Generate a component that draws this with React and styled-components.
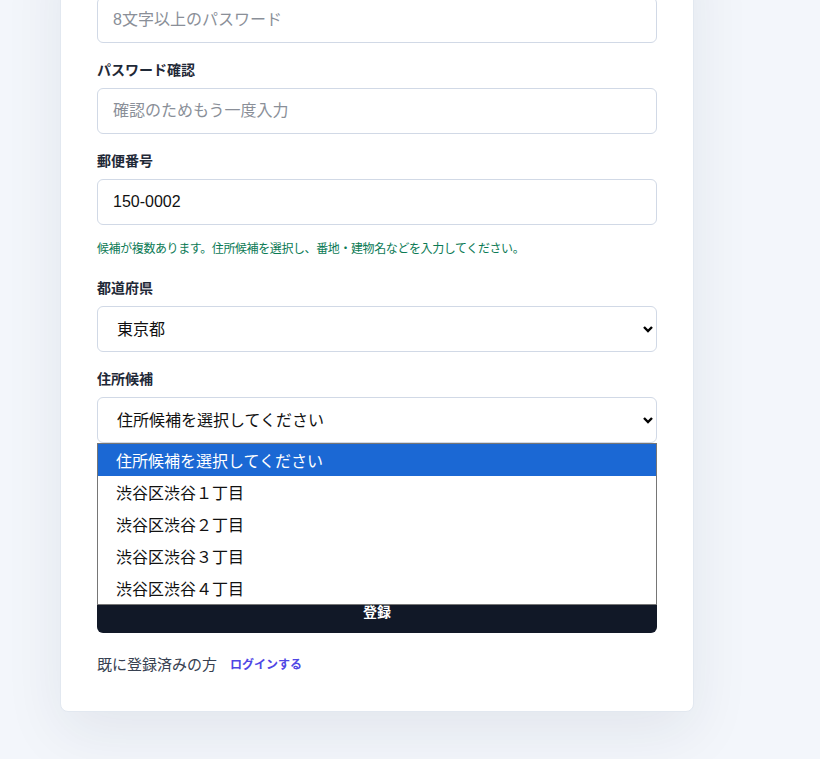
import React from 'react'
import styled, { createGlobalStyle } from 'styled-components'

const GlobalStyle = createGlobalStyle`
  * { box-sizing: border-box; }
  html, body {
    margin: 0;
    background: #f3f6fb;
    font-family: "Liberation Sans", "Noto Sans CJK JP", sans-serif;
  }
`

const Page = styled.div`
  display: flow-root;
  height: 759px;
  padding-left: 60px;
  overflow: hidden;
`

const Card = styled.div`
  width: 634px;
  margin-top: -68px;
  padding: 36px;
  background: #fff;
  border: 1px solid #e2e8f0;
  border-radius: 8px;
  box-shadow: 0 20px 60px rgba(30, 41, 59, 0.08);
`

const Form = styled.form`
  display: flex;
  flex-direction: column;
  gap: 17px;
`

const Field = styled.div`
  display: flex;
  flex-direction: column;
  gap: 8px;
`

const Label = styled.label`
  font-size: 14px;
  line-height: 20px;
  font-weight: 700;
  color: #1f2937;
`

const Input = styled.input`
  height: 46px;
  padding: 0 15px;
  border: 1px solid #d1d9e6;
  border-radius: 6px;
  font: inherit;
  font-size: 16px;
  color: #111;
  background: #fff;
  &::placeholder { color: #8a8f98; }
`

const SelectWrap = styled.div`
  position: relative;
`

const Select = styled.select`
  width: 100%;
  height: 46px;
  padding: 0 19px;
  border: 1px solid #d1d9e6;
  border-radius: 6px;
  font: inherit;
  font-size: 16px;
  color: #111;
  background: #fff;
  appearance: none;
`

const Chevron = styled.svg`
  position: absolute;
  right: 4px;
  top: 19px;
  width: 10px;
  height: 8px;
  pointer-events: none;
`

const Helper = styled.p`
  margin: 8px 0 4px;
  font-size: 12px;
  line-height: 16px;
  letter-spacing: -0.4px;
  color: #0b7a55;
`

const Dropdown = styled.ul`
  position: absolute;
  top: 100%;
  left: 0;
  right: 0;
  margin: 0;
  padding: 0;
  list-style: none;
  background: #fff;
  border: 1px solid #767676;
  z-index: 10;
`

const Option = styled.li`
  height: 32px;
  padding-left: 18px;
  display: flex;
  align-items: center;
  font-size: 16px;
  color: ${p => (p.$active ? '#fff' : '#111')};
  background: ${p => (p.$active ? '#1b68d4' : '#fff')};
`

const Button = styled.button`
  height: 44px;
  margin-top: 66px;
  border: 0;
  border-radius: 6px;
  background: #111827;
  color: #fff;
  font: inherit;
  font-size: 14px;
  font-weight: 700;
`

const Footer = styled.div`
  display: flex;
  align-items: center;
  gap: 13px;
  margin-top: 22px;
  line-height: 20px;
  font-size: 15px;
  color: #374151;
`

const LoginLink = styled.a`
  font-size: 12px;
  font-weight: 700;
  color: #4f46e5;
  text-decoration: none;
`

const options = ['住所候補を選択してください', '渋谷区渋谷１丁目', '渋谷区渋谷２丁目', '渋谷区渋谷３丁目', '渋谷区渋谷４丁目']

const Arrow = () => (
  <Chevron viewBox="0 0 10 8">
    <polyline points="1 2 5 6 9 2" fill="none" stroke="#000" strokeWidth="2.4" />
  </Chevron>
)

export default function App() {
  return (
    <Page>
      <GlobalStyle />
      <Card>
        <Form onSubmit={e => e.preventDefault()}>
          <Field>
            <Label>パスワード</Label>
            <Input type="password" placeholder="8文字以上のパスワード" />
          </Field>
          <Field>
            <Label>パスワード確認</Label>
            <Input type="password" placeholder="確認のためもう一度入力" />
          </Field>
          <Field>
            <Label>郵便番号</Label>
            <Input defaultValue="150-0002" />
            <Helper>候補が複数あります。住所候補を選択し、番地・建物名などを入力してください。</Helper>
          </Field>
          <Field>
            <Label>都道府県</Label>
            <SelectWrap>
              <Select defaultValue="東京都">
                <option>東京都</option>
              </Select>
              <Arrow />
            </SelectWrap>
          </Field>
          <Field>
            <Label>住所候補</Label>
            <SelectWrap>
              <Select defaultValue={options[0]}>
                {options.map(o => <option key={o}>{o}</option>)}
              </Select>
              <Arrow />
              <Dropdown>
                {options.map((o, i) => (
                  <Option key={o} $active={i === 0}>{o}</Option>
                ))}
              </Dropdown>
            </SelectWrap>
          </Field>
          <Field>
            <Input aria-label="番地・建物名" />
          </Field>
          <Button type="submit">登録</Button>
        </Form>
        <Footer>
          既に登録済みの方
          <LoginLink href="#">ログインする</LoginLink>
        </Footer>
      </Card>
    </Page>
  )
}
